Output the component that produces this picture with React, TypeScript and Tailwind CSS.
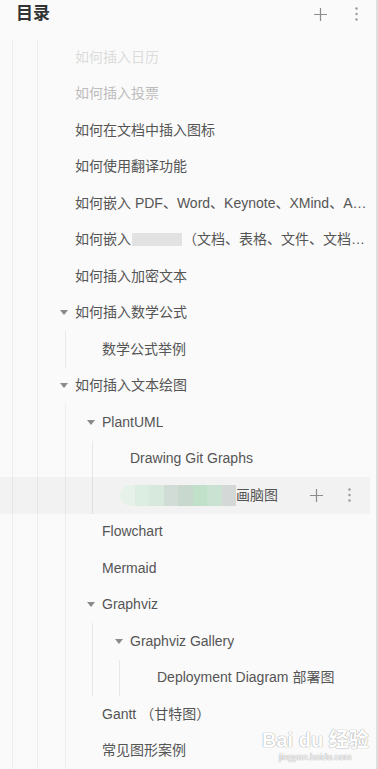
type Row = { text: string; arrow?: boolean; tone?: string };

const font = "font-['Liberation_Sans','Noto_Sans_CJK_SC',sans-serif]";

function Caret() {
  return (
    <span className="flex w-[15px] shrink-0 items-center">
      <svg width="8" height="5" viewBox="0 0 8 5">
        <path d="M0 0H8L4 5Z" fill="#8a8a8a" />
      </svg>
    </span>
  );
}

function Item({ text, arrow, tone, pad }: Row & { pad: string }) {
  return (
    <div className={`flex h-[36.5px] items-center whitespace-nowrap ${pad}`}>
      {arrow && <Caret />}
      <span className={`truncate ${tone ?? "text-[#555]"}`}>{text}</span>
    </div>
  );
}

function Plus({ size = 13 }: { size?: number }) {
  return (
    <svg width={size} height={size} viewBox="0 0 13 13">
      <path d="M6.5 0V13M0 6.5H13" stroke="#8c8c8c" strokeWidth="1.2" />
    </svg>
  );
}

function Dots() {
  return (
    <svg width="3" height="14" viewBox="0 0 3 14">
      <circle cx="1.5" cy="1.5" r="1.2" fill="#999" />
      <circle cx="1.5" cy="7" r="1.2" fill="#999" />
      <circle cx="1.5" cy="12.5" r="1.2" fill="#999" />
    </svg>
  );
}

const top: Row[] = [
  { text: "如何插入日历", tone: "text-[#dcdcdc]" },
  { text: "如何插入投票", tone: "text-[#bdbdbd]" },
  { text: "如何在文档中插入图标" },
  { text: "如何使用翻译功能" },
  { text: "如何嵌入 PDF、Word、Keynote、XMind、Axure 等文件" },
];

const mosaic = [
  "bg-[#e6f1ea]",
  "bg-[#dbeee1]",
  "bg-[#d6e9dc]",
  "bg-[#d0dcd5]",
  "bg-[#c9d8cf]",
  "bg-[#c0e0ca]",
  "bg-[#c9e2d1]",
  "bg-[#d4d8d6]",
];

export default function App() {
  return (
    <div
      className={`relative h-[769px] w-[378px] overflow-hidden border-r-2 border-[#dedede] bg-[#fafafa] text-[14px] ${font}`}
    >
      <div className="flex h-[39px] items-start pl-[16px] pr-[18px] pt-[2px]">
        <span className="text-[17px] font-semibold leading-[24px] text-[#333]">目录</span>
        <div className="ml-auto flex h-[24px] items-center gap-[28px]">
          <Plus />
          <Dots />
        </div>
      </div>

      <div className="ml-[12px] border-l border-[#ededed]">
        <div className="ml-[24px] border-l border-[#ededed]">
          {top.map((r) => (
            <Item key={r.text} {...r} pad="pl-[37px] pr-[4px]" />
          ))}
          <div className="flex h-[36.5px] items-center whitespace-nowrap pl-[37px] pr-[4px] text-[#555]">
            <span className="shrink-0">如何嵌入</span>
            <span className="mx-[1px] h-[13px] w-[50px] shrink-0 bg-[#e2e2e2]" />
            <span className="truncate">（文档、表格、文件、文档夹等）</span>
          </div>
          <Item text="如何插入加密文本" pad="pl-[37px]" />
          <Item text="如何插入数学公式" arrow pad="pl-[22px]" />
          <div className="ml-[27px] border-l border-[#e8e8e8]">
            <Item text="数学公式举例" pad="pl-[36px]" />
          </div>
          <Item text="如何插入文本绘图" arrow pad="pl-[22px]" />
          <div className="ml-[27px] border-l border-[#ededed]">
            <Item text="PlantUML" arrow pad="pl-[21px]" />
            <div className="ml-[26px] border-l border-[#e8e8e8]">
              <Item text="Drawing Git Graphs" pad="pl-[37px]" />
              <div className="-ml-[93px] mr-[6px] flex h-[36.5px] items-center whitespace-nowrap bg-black/[0.03] pl-[120px] pr-[19px]">
                <div className="flex h-[21px] w-[116px] shrink-0 overflow-hidden rounded-l-[10px]">
                  {mosaic.map((c, i) => (
                    <span key={i} className={`h-full flex-1 ${c}`} />
                  ))}
                </div>
                <span className="text-[#555]">画脑图</span>
                <div className="ml-auto flex items-center gap-[25px]">
                  <Plus size={13} />
                  <Dots />
                </div>
              </div>
            </div>
            <Item text="Flowchart" pad="pl-[36px]" />
            <Item text="Mermaid" pad="pl-[36px]" />
            <Item text="Graphviz" arrow pad="pl-[21px]" />
            <div className="ml-[26px] border-l border-[#e8e8e8]">
              <Item text="Graphviz Gallery" arrow pad="pl-[22px]" />
              <div className="ml-[26px] border-l border-[#e8e8e8]">
                <Item text="Deployment Diagram 部署图" pad="pl-[37px]" />
              </div>
            </div>
            <Item text="Gantt （甘特图）" pad="pl-[36px]" />
            <Item text="常见图形案例" pad="pl-[36px]" />
            <div className="h-[40px]" />
          </div>
        </div>
      </div>

      <div className="pointer-events-none absolute left-[262px] top-[730px] flex flex-col items-center whitespace-nowrap leading-none text-white [text-shadow:0_0_1px_#a0a0a0,0_0_1px_#a0a0a0]">
        <span className="text-[20px] font-bold">Bai du 经验</span>
        <span className="mt-[3px] text-[9px]">jingyan.baidu.com</span>
      </div>
    </div>
  );
}
